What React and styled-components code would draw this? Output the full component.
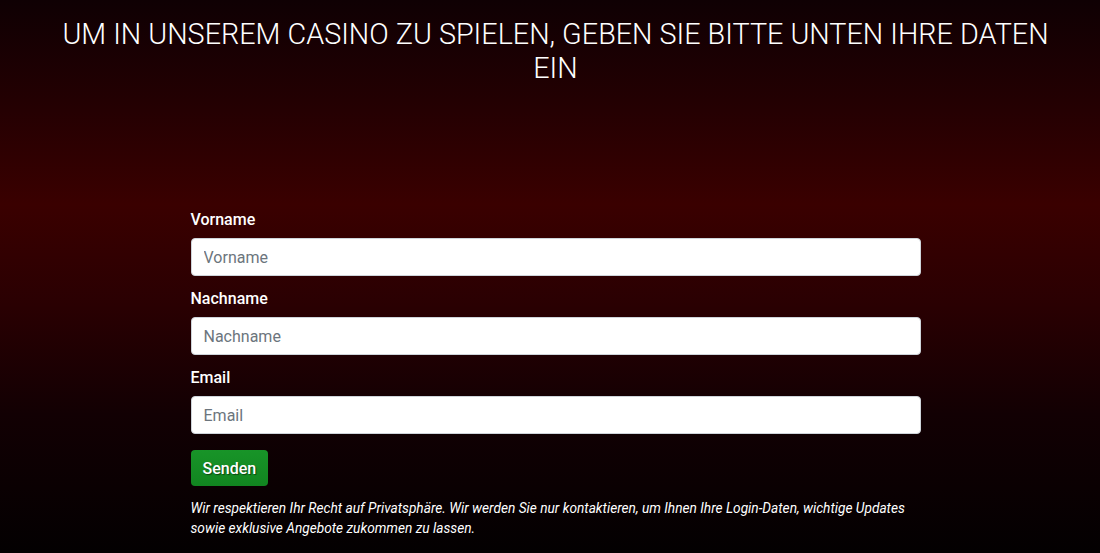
import React from "react";
import styled, { createGlobalStyle } from "styled-components";

const Global = createGlobalStyle`
  html, body { margin: 0; padding: 0; }
  body {
    font-family: Roboto, "Liberation Sans", sans-serif;
    background: #000;
  }
  * { box-sizing: border-box; }
`;

const Page = styled.div`
  width: 1100px;
  height: 553px;
  overflow: hidden;
  padding-left: 11px;
  background: linear-gradient(
    to bottom,
    #0f0003 0%,
    #250002 20%,
    #3a0000 37%,
    #2a0002 55%,
    #120003 75%,
    #030001 100%
  );
  display: flex;
  flex-direction: column;
  align-items: center;
`;

const Heading = styled.h1`
  margin: 17px 0 0;
  width: 1010px;
  text-align: center;
  font-family: Roboto, "Liberation Sans", sans-serif;
  font-weight: 300;
  font-size: 28.75px;
  line-height: 34px;
  color: #ffffff;
  text-transform: uppercase;
`;

const Form = styled.form`
  margin-top: 124px;
  width: 730px;
  display: flex;
  flex-direction: column;
`;

const Field = styled.div`
  display: flex;
  flex-direction: column;
  margin-bottom: 12px;
`;

const Label = styled.label`
  font-size: 16px;
  font-weight: 500;
  color: #ffffff;
  line-height: 22px;
  margin-bottom: 7px;
`;

const Input = styled.input`
  width: 100%;
  height: 38px;
  border: 1px solid #ced4da;
  border-radius: 4px;
  background: #fff;
  padding: 0 12px;
  font-family: Roboto, "Liberation Sans", sans-serif;
  font-size: 16px;
  color: #495057;
  outline: none;
  &::placeholder { color: #6c757d; }
`;

const Button = styled.button`
  align-self: flex-start;
  margin-top: 4px;
  height: 36px;
  padding: 0 12px;
  border: none;
  border-radius: 4px;
  background: linear-gradient(to bottom, #189428, #118520);
  color: #fff;
  font-family: Roboto, "Liberation Sans", sans-serif;
  font-size: 16px;
  font-weight: 500;
  text-shadow: 1px 1px 1px rgba(0,0,0,0.5);
  cursor: pointer;
`;

const Note = styled.p`
  margin: 13px 0 0;
  font-size: 13.7px;
  font-style: italic;
  line-height: 19.5px;
  color: #ffffff;
`;

export default function App() {
  return (
    <Page>
      <Global />
      <Heading>
        Um in unserem Casino zu spielen, geben Sie bitte unten Ihre Daten ein
      </Heading>
      <Form onSubmit={(e) => e.preventDefault()}>
        <Field>
          <Label>Vorname</Label>
          <Input placeholder="Vorname" />
        </Field>
        <Field>
          <Label>Nachname</Label>
          <Input placeholder="Nachname" />
        </Field>
        <Field>
          <Label>Email</Label>
          <Input placeholder="Email" />
        </Field>
        <Button type="submit">Senden</Button>
        <Note>
          Wir respektieren Ihr Recht auf Privatsphäre. Wir werden Sie nur
          kontaktieren, um Ihnen Ihre Login-Daten, wichtige Updates sowie
          exklusive Angebote zukommen zu lassen.
        </Note>
      </Form>
    </Page>
  );
}
